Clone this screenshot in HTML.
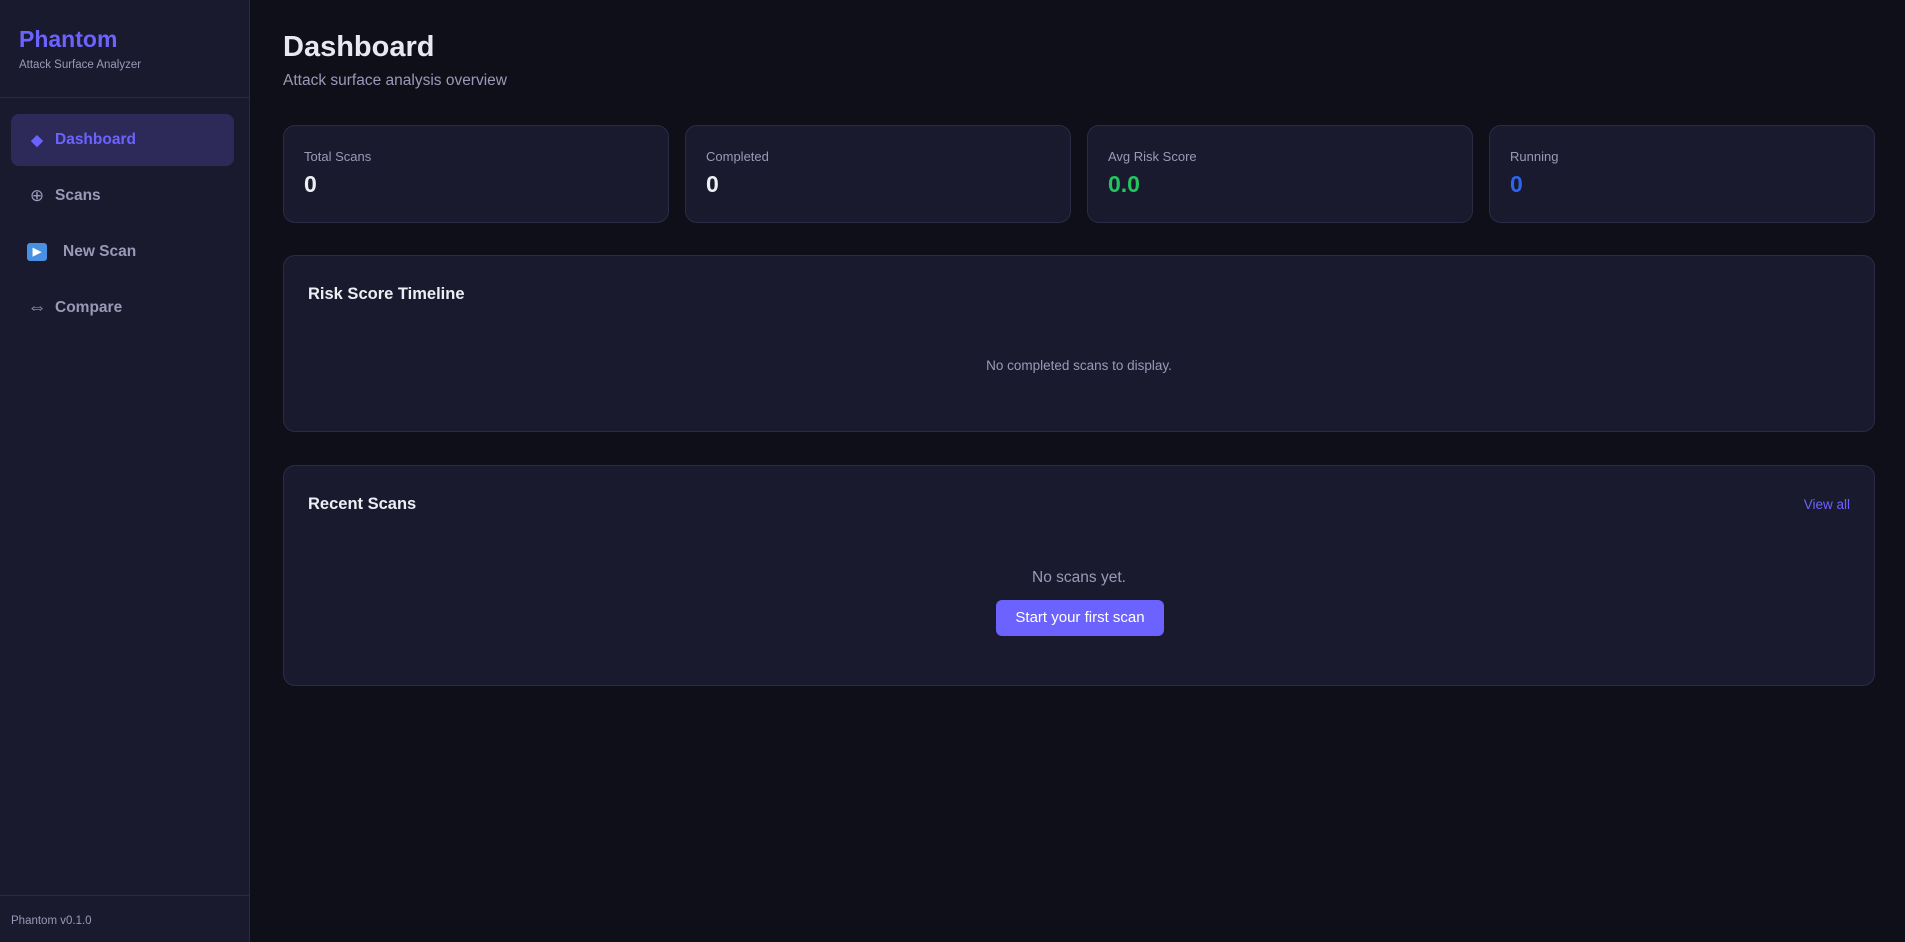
<!DOCTYPE html>
<html><head><meta charset="utf-8"><style>
*{box-sizing:border-box;margin:0;padding:0}
body{width:1905px;height:942px;background:#0f0f19;font-family:"Liberation Sans",sans-serif;position:relative;overflow:hidden;color:#e6e6f0}
.sb{position:absolute;left:0;top:0;width:250px;height:942px;background:#1a1a2e;border-right:1px solid #2a2a42}
.logo{position:absolute;left:19px;top:26px;font-size:23px;font-weight:bold;color:#6c63ff}
.tag{position:absolute;left:19px;top:59px;font-size:11.5px;color:#9a9ab8}
.hl{position:absolute;left:0;width:250px;height:1px;background:#2a2a42}
.nav{position:absolute;left:11px;width:223px;height:52px;border-radius:8px;font-size:15.5px;font-weight:bold;color:#9a9ab8;display:flex;align-items:center;padding-left:16px}
.nav .i{width:20px;display:inline-block;text-align:center;margin-right:8px;font-size:15px}
.act{background:#2d2a5a;color:#6c63ff}
.foot{position:absolute;left:11px;top:915px;font-size:11.5px;color:#9a9ab8}
h1{position:absolute;left:283px;top:31px;font-size:29px;color:#e8e8f2}
.sub{position:absolute;left:283px;top:72px;font-size:15.5px;color:#9a9ab8}
.card{position:absolute;background:#1a1a2e;border:1px solid #2b2b45;border-radius:12px}
.lab{position:absolute;left:20px;top:23px;font-size:13px;color:#9a9ab8}
.val{position:absolute;left:20px;top:45px;font-size:23px;font-weight:bold;color:#eeeef5}
.st{position:absolute;left:24px;top:29px;font-size:16.5px;font-weight:bold;color:#eeeef5}
</style></head><body>
<div class="sb">
<div class="logo">Phantom</div>
<div class="tag">Attack Surface Analyzer</div>
<div class="hl" style="top:97px"></div>
<div class="nav act" style="top:114px"><span class="i">◆</span>Dashboard</div>
<div class="nav" style="top:170px"><span class="i" style="font-size:17px;font-weight:normal">⊕</span>Scans</div>
<div class="nav" style="top:226px"><span class="i" style="width:20px;height:18px;background:#4a90e2;border-radius:3px;color:#fff;font-size:11px;line-height:18px;margin-right:16px">▶</span>New Scan</div>
<div class="nav" style="top:282px"><span class="i" style="font-size:19px;font-weight:normal">⇔</span>Compare</div>
<div class="hl" style="top:895px"></div>
<div class="foot">Phantom v0.1.0</div>
</div>
<h1>Dashboard</h1>
<div class="sub">Attack surface analysis overview</div>
<div class="card" style="left:283px;top:125px;width:386px;height:98px"><div class="lab">Total Scans</div><div class="val">0</div></div>
<div class="card" style="left:685px;top:125px;width:386px;height:98px"><div class="lab">Completed</div><div class="val">0</div></div>
<div class="card" style="left:1087px;top:125px;width:386px;height:98px"><div class="lab">Avg Risk Score</div><div class="val" style="color:#22c55e">0.0</div></div>
<div class="card" style="left:1489px;top:125px;width:386px;height:98px"><div class="lab">Running</div><div class="val" style="color:#2f64f0">0</div></div>
<div class="card" style="left:283px;top:255px;width:1592px;height:177px"><div class="st">Risk Score Timeline</div>
<div style="position:absolute;left:0;right:0;top:102px;text-align:center;font-size:13.5px;color:#9a9ab8">No completed scans to display.</div></div>
<div class="card" style="left:283px;top:465px;width:1592px;height:221px"><div class="st">Recent Scans</div>
<div style="position:absolute;right:24px;top:31px;font-size:13.5px;color:#6c63ff">View all</div>
<div style="position:absolute;left:0;right:0;top:103px;text-align:center;font-size:15.5px;color:#9a9ab8">No scans yet.</div>
<div style="position:absolute;left:712px;top:134px;width:168px;height:36px;background:#6c63ff;border-radius:6px;color:#fff;font-size:15px;text-align:center;line-height:36px">Start your first scan</div>
</div>
</body></html>
